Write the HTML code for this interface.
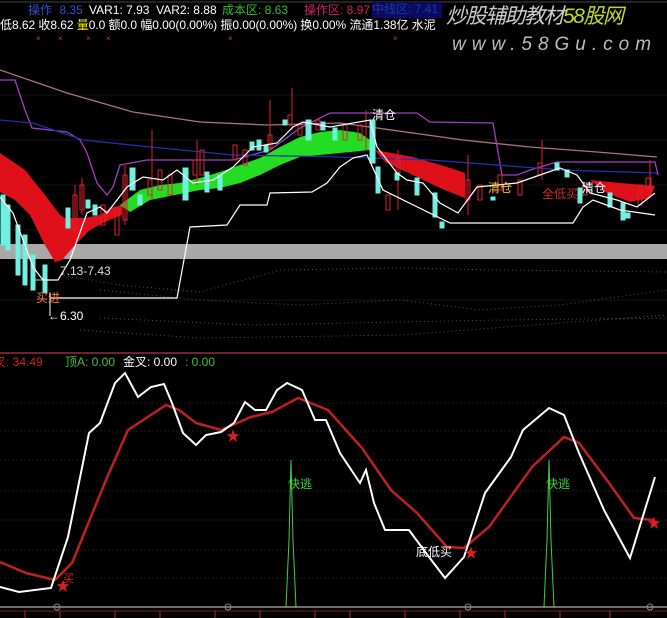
<!DOCTYPE html>
<html><head><meta charset="utf-8"><style>
html,body{margin:0;padding:0;background:#000;width:667px;height:618px;overflow:hidden}
body{position:relative;font-family:"Liberation Sans","Noto Sans CJK SC",sans-serif}
.t{position:absolute;white-space:nowrap;font-size:12px;line-height:14px}
</style></head><body>
<svg width="667" height="618" style="position:absolute;left:0;top:0">
<line x1="0" y1="2" x2="667" y2="2" stroke="#444"/>
<g fill="#c36" font-size="8" font-family="Liberation Sans">
<text x="36" y="41">×</text><text x="58" y="41">×</text><text x="86" y="41">×</text><text x="106" y="41">×</text><text x="228" y="41">×</text><text x="393" y="41">×</text>
</g>
<g stroke="#151515"><line x1="0" y1="95" x2="667" y2="95"/><line x1="0" y1="140" x2="667" y2="140"/><line x1="0" y1="185" x2="667" y2="185"/><line x1="0" y1="230" x2="667" y2="230"/><line x1="0" y1="300" x2="667" y2="300"/></g>
<g fill="none" stroke="#555" stroke-dasharray="1 3">
<polyline points="60,275 120,285 200,292 280,270 400,268 500,270 667,272"/>
<polyline points="100,290 200,300 300,305 400,300 480,310 560,305 667,290"/>
<polyline points="100,318 250,325 400,322 500,320 667,318"/>
<polyline points="80,330 200,338 400,335 667,315"/>
</g>
<rect x="0" y="244" width="667" height="15" fill="#a9a9a9"/>
<polygon fill="#e0101a" points="0,153 25,170 45,195 60,215 65,218 85,218 100,215 110,208 122,205 122,215 105,222 90,230 75,245 62,260 55,262 45,245 30,215 15,200 0,192"/>
<polygon fill="#22dd22" points="120,205 140,190 160,185 180,183 200,178 220,172 240,165 260,158 280,147 300,137 320,132 340,130 360,133 370,140 370,150 350,152 320,155 300,157 280,165 260,175 240,183 220,188 200,190 175,195 150,200 130,212"/>
<polygon fill="#e0101a" points="375,150 413,157 447,167 465,173 465,198 440,188 413,175 385,162"/>
<polygon fill="#e0101a" points="590,180 620,183 655,186 650,198 630,202 605,192"/>
<polyline fill="none" stroke="#b07080" stroke-width="1.3" points="0,70 67,93 133,112 200,122 267,125 340,123 377,128 463,140 530,147 597,152 657,157"/>
<polyline fill="none" stroke="#a040c0" stroke-width="1.3" points="0,80 15,80 25,110 32,128 67,132 80,140 87,153 97,183 107,195 113,187 120,165 147,160 233,160 270,150 300,128 330,113 417,113 430,122 493,123 502,175 517,175 530,170 557,162 655,162 658,175"/>
<polyline fill="none" stroke="#2030b0" stroke-width="1.3" points="0,120 33,123 83,140 150,147 233,155 340,157 430,160 563,170 657,173"/>
<g stroke="#e02030" fill="none">
<line x1="75" y1="185" x2="75" y2="235"/><rect x="73" y="195" width="4" height="35"/>
<line x1="82" y1="178" x2="82" y2="215"/><rect x="80" y="185" width="4" height="25"/>
<rect x="101" y="205" width="4" height="20"/><rect x="115" y="210" width="4" height="25"/>
<line x1="125" y1="165" x2="125" y2="225"/><rect x="123" y="175" width="4" height="45"/>
<rect x="148" y="180" width="4" height="15"/><line x1="152" y1="130" x2="152" y2="200"/><rect x="158" y="170" width="4" height="20"/><rect x="168" y="175" width="4" height="20"/>
<line x1="197" y1="140" x2="197" y2="185"/><rect x="193" y="160" width="4" height="15"/><rect x="200" y="150" width="4" height="25"/>
<rect x="233" y="145" width="4" height="15"/><rect x="243" y="150" width="4" height="15"/><line x1="270" y1="100" x2="270" y2="150"/><rect x="268" y="135" width="4" height="13"/>
<line x1="292" y1="88" x2="292" y2="130"/><rect x="288" y="115" width="4" height="10"/><rect x="298" y="125" width="4" height="10"/><rect x="316" y="120" width="4" height="10"/>
<rect x="343" y="125" width="4" height="15"/><rect x="358" y="125" width="4" height="15"/><line x1="366" y1="110" x2="366" y2="150"/>
<rect x="386" y="195" width="4" height="15"/><line x1="398" y1="150" x2="398" y2="210"/><rect x="396" y="158" width="4" height="15"/>
<line x1="468" y1="155" x2="468" y2="215"/><rect x="466" y="180" width="4" height="20"/><rect x="478" y="185" width="4" height="15"/><rect x="498" y="175" width="4" height="15"/><rect x="518" y="180" width="4" height="15"/>
<line x1="542" y1="140" x2="542" y2="180"/><rect x="538" y="163" width="4" height="12"/><rect x="583" y="185" width="4" height="10"/><rect x="638" y="185" width="4" height="20"/><line x1="650" y1="160" x2="650" y2="195"/><rect x="646" y="178" width="5" height="10"/>
</g>
<g fill="#70f0e0" stroke="#70f0e0">
<rect x="1" y="195" width="4" height="50"/><rect x="6" y="205" width="4" height="45"/><rect x="16" y="225" width="4" height="50"/><rect x="23" y="235" width="4" height="50"/><rect x="31" y="255" width="4" height="35"/><rect x="43" y="265" width="4" height="28"/>
<line x1="35" y1="280" x2="50" y2="280"/><rect x="66" y="208" width="4" height="20"/><rect x="86" y="200" width="4" height="8"/><rect x="93" y="205" width="4" height="10"/>
<rect x="130" y="168" width="5" height="22"/><rect x="138" y="195" width="4" height="10"/><rect x="183" y="168" width="5" height="32"/><rect x="205" y="172" width="4" height="20"/>
<rect x="218" y="175" width="4" height="15"/><rect x="250" y="142" width="4" height="8"/><rect x="257" y="140" width="4" height="10"/><rect x="264" y="145" width="4" height="7"/>
<rect x="283" y="120" width="4" height="5"/><rect x="306" y="120" width="5" height="20"/><rect x="321" y="122" width="4" height="8"/><rect x="333" y="128" width="4" height="12"/>
<rect x="370" y="120" width="5" height="43"/><rect x="376" y="167" width="4" height="26"/><rect x="395" y="173" width="4" height="7"/><rect x="415" y="178" width="4" height="17"/>
<rect x="433" y="193" width="4" height="24"/><rect x="440" y="222" width="4" height="6"/><rect x="491" y="197" width="4" height="3"/><rect x="555" y="163" width="4" height="7"/>
<rect x="565" y="170" width="4" height="7"/><rect x="578" y="188" width="4" height="15"/><rect x="608" y="193" width="4" height="14"/><rect x="621" y="203" width="4" height="17"/><rect x="626" y="213" width="4" height="5"/>
</g>
<polyline fill="none" stroke="#fff" stroke-width="1.2" points="0,197 13,213 33,267 43,280 58,280 70,260 87,213 100,207 107,213 127,187 143,177 163,180 177,170 193,183 213,180 233,167 253,147 277,143 293,127 303,122 330,127 370,120 377,147 397,173 407,180 423,183 440,203 458,213 477,187 517,183 560,168 577,175 590,193 617,200 637,207 655,193"/>
<polyline fill="none" stroke="#fff" stroke-width="1.2" points="50,293 50,298 177,298 190,227 227,225 240,205 267,205 270,193 312,192 327,183 340,167 353,158 367,155 383,190 450,223 573,223 583,207 593,200 620,210 655,215"/>
<line x1="50" y1="298" x2="50" y2="316" stroke="#fff"/>
<g font-family="Liberation Sans,Noto Sans CJK SC,sans-serif" font-size="12">
<text x="36" y="302" fill="#ff8040">买进</text>
<text x="60" y="275" fill="#ddd">7.13-7.43</text>
<text x="48" y="320" fill="#fff">←6.30</text>
<text x="372" y="119" fill="#fff">清仓</text>
<text x="488" y="192" fill="#ffc040">清仓</text>
<text x="542" y="198" fill="#d03020">全低买</text>
<text x="582" y="192" fill="#fff">清仓</text>
</g>
<line x1="0" y1="353" x2="667" y2="353" stroke="#702030" stroke-width="2"/>
<g stroke="#1e1e1e" stroke-dasharray="2 2"><line x1="0" y1="403" x2="667" y2="403"/><line x1="0" y1="431" x2="667" y2="431"/><line x1="0" y1="460" x2="667" y2="460"/><line x1="0" y1="491" x2="667" y2="491"/><line x1="0" y1="520" x2="667" y2="520"/><line x1="0" y1="550" x2="667" y2="550"/><line x1="0" y1="578" x2="667" y2="578"/></g>
<polyline fill="none" stroke="#40d040" points="286,607 289,540 291,460 293,540 296,607"/>
<polyline fill="none" stroke="#40d040" points="544,607 547,540 549,460 551,540 554,607"/>
<text x="288" y="488" fill="#40d040" font-size="12" font-family="Noto Sans CJK SC,sans-serif">快逃</text>
<text x="546" y="488" fill="#40d040" font-size="12" font-family="Noto Sans CJK SC,sans-serif">快逃</text>
<polyline fill="none" stroke="#c02020" stroke-width="2.5" points="0,562 26,573 55,580 72,563 106,480 128,430 166,405 179,410 196,423 221,430 251,417 272,412 298,398 328,410 362,448 391,490 417,513 447,547 464,548 489,527 532,467 564,437 579,443 609,483 634,518 653,520"/>
<polyline fill="none" stroke="#fff" stroke-width="2" points="0,587 19,592 51,588 68,537 89,433 100,423 115,383 125,373 138,397 151,387 164,384 172,403 183,433 196,445 206,435 221,432 234,423 245,402 255,410 266,410 277,390 287,383 302,390 315,420 326,420 340,453 360,483 366,470 374,503 385,530 409,530 426,553 445,578 464,557 485,493 511,457 523,430 549,408 564,415 579,453 604,510 630,558 655,477"/>
<text x="416" y="556" fill="#fff" font-size="12" font-family="Noto Sans CJK SC,sans-serif">底低买</text>
<text x="63" y="582" fill="#e02020" font-size="11" font-family="Noto Sans CJK SC,sans-serif">买</text>
<g fill="#e02020" font-size="14"><text x="56" y="591">★</text><text x="226" y="441">★</text><text x="464" y="558">★</text><text x="647" y="528">★</text></g>
<line x1="0" y1="607" x2="667" y2="607" stroke="#ddd"/>
<g fill="none" stroke="#888"><circle cx="57" cy="607" r="3"/><circle cx="228" cy="607" r="3"/><circle cx="468" cy="607" r="3"/><circle cx="650" cy="607" r="3"/></g>
<g stroke="#802020"><line x1="0" y1="611" x2="667" y2="611"/></g>
<g stroke="#a03030"><line x1="25" y1="611" x2="25" y2="618"/><line x1="60" y1="611" x2="60" y2="618"/><line x1="115" y1="611" x2="115" y2="618"/><line x1="160" y1="611" x2="160" y2="618"/><line x1="215" y1="611" x2="215" y2="618"/><line x1="260" y1="611" x2="260" y2="618"/><line x1="315" y1="611" x2="315" y2="618"/><line x1="350" y1="611" x2="350" y2="618"/><line x1="405" y1="611" x2="405" y2="618"/><line x1="460" y1="611" x2="460" y2="618"/><line x1="505" y1="611" x2="505" y2="618"/><line x1="560" y1="611" x2="560" y2="618"/><line x1="610" y1="611" x2="610" y2="618"/></g>
</svg>
<div class="t" style="left:28px;top:3px;color:#3050d0">操作 <span style="margin-left:4px">8.35</span></div>
<div class="t" style="left:89px;top:3px;color:#fff">VAR1: 7.93&nbsp; VAR2: 8.88</div>
<div class="t" style="left:222px;top:3px;color:#30c030">成本区: 8.63</div>
<div class="t" style="left:304px;top:3px;color:#d02060">操作区: 8.97</div>
<div class="t" style="left:372px;top:2px;width:70px;height:16px;background:#0a0a60;color:#2038a0">中线区: 7.41</div>
<div class="t" style="left:0;top:18px;color:#fff;font-size:12px;letter-spacing:-0.05px">低8.62 收8.62 <span style="color:#ee0">量</span>0.0 额0.0 幅0.00(0.00%) 振0.00(0.00%) 换0.00% 流通1.38亿 水泥</div>
<div class="t" style="left:446px;top:4px;font-size:21px;line-height:26px;font-style:italic;color:#ccc;letter-spacing:-1.5px">炒股辅助教材<span style="color:#c8d820">58股网</span></div>
<div class="t" style="left:452px;top:34px;font-size:19px;line-height:22px;font-style:italic;color:#bbb;letter-spacing:6px">www.58Gu.com</div>
<div class="t" style="left:-6px;top:355px;color:#d02020">叉: 34.49</div>
<div class="t" style="left:65px;top:355px;color:#40c040">顶A: 0.00</div>
<div class="t" style="left:123px;top:355px;color:#fff">金叉: 0.00</div>
<div class="t" style="left:185px;top:355px;color:#40c040">: 0.00</div>
</body></html>
